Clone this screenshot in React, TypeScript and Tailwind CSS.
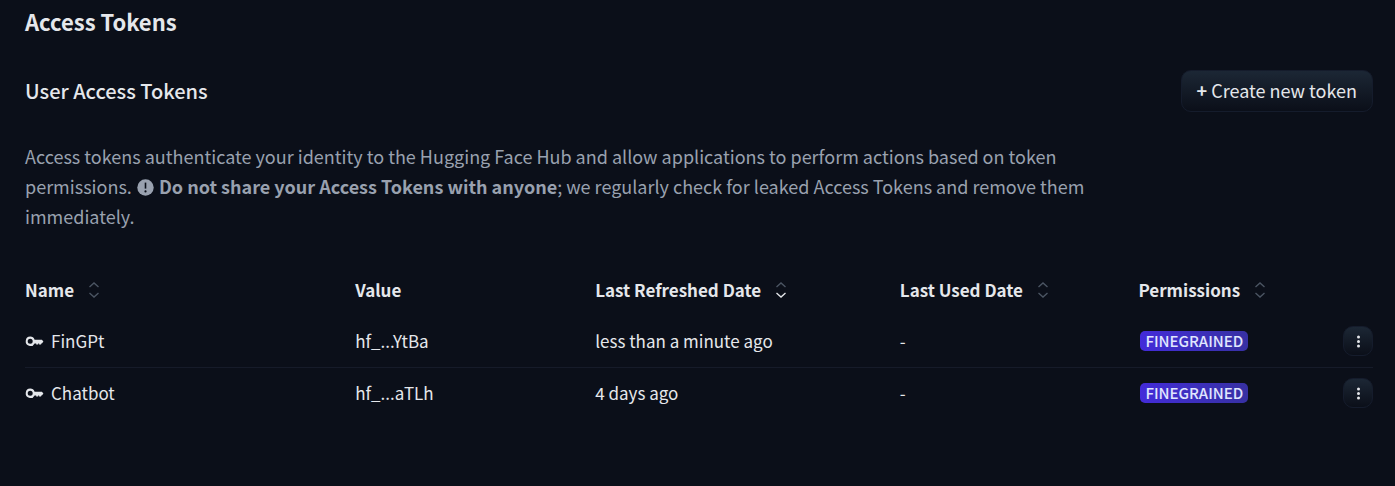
import React from "react";

type SortState = "none" | "desc";

const tokens = [
  { name: "FinGPt", value: "hf_...YtBa", refreshed: "less than a minute ago", used: "-", permission: "FINEGRAINED" },
  { name: "Chatbot", value: "hf_...aTLh", refreshed: "4 days ago", used: "-", permission: "FINEGRAINED" },
];

function KeyIcon() {
  return (
    <svg className="h-5 w-5 shrink-0" viewBox="0 0 20 20" fill="currentColor" aria-hidden="true">
      <path
        fillRule="evenodd"
        d="M5.2 5.6a4.7 4.7 0 0 1 4.4 3.2h7.3l1.5 1.6-1.5 2h-.8v1h-2v-1h-.9v1h-2v-1H9.6A4.7 4.7 0 1 1 5.2 5.6Zm0 2.2a2.5 2.5 0 1 0 0 5 2.5 2.5 0 0 0 0-5Z"
      />
    </svg>
  );
}

function SortIcon({ state }: { state: SortState }) {
  return (
    <svg className="h-4 w-3 shrink-0" viewBox="0 0 12 16" fill="none" strokeWidth="1.3" aria-hidden="true">
      <path d="M1.5 5 6 .9 10.5 5" className="stroke-[#4b5563]" />
      <path d="M1.5 11 6 15.1 10.5 11" className={state === "desc" ? "stroke-gray-200" : "stroke-[#4b5563]"} />
    </svg>
  );
}

function HeaderCell({ label, sort, width }: { label: string; sort?: SortState; width: string }) {
  return (
    <th scope="col" className={`${width} p-0 text-left text-[17px] font-bold`}>
      {sort ? (
        <button type="button" className="flex items-center gap-[14px] whitespace-nowrap">
          {label}
          <SortIcon state={sort} />
        </button>
      ) : (
        label
      )}
    </th>
  );
}

export default function App() {
  return (
    <main className="min-h-screen bg-[#0b0f19] pr-[22px] pb-16 pl-[25px] font-['Noto_Sans_CJK_SC',sans-serif] text-lg text-gray-200">
      <h1 className="pt-[6px] text-[22px] leading-[30px] font-bold">Access Tokens</h1>

      <section className="pt-[34px]">
        <div className="flex items-center justify-between">
          <h2 className="text-[20px] leading-[30px] font-medium">User Access Tokens</h2>
          <button
            type="button"
            className="h-[42px] rounded-[10px] border border-[#151c2c] bg-linear-to-b from-[#1c2735] to-[#0b0f19] px-[15px] pb-[2px] leading-[30px] whitespace-nowrap"
          >
            <span className="font-bold">+</span> Create new token
          </button>
        </div>

        <p className="max-w-[1070px] pt-[29px] leading-[30px] text-gray-400">
          Access tokens authenticate your identity to the Hugging Face Hub and allow applications to perform actions
          based on token permissions.{" "}
          <svg className="mx-px inline h-[17px] w-[17px] align-[-2px]" viewBox="0 0 17 17" aria-hidden="true">
            <circle cx="8.5" cy="8.5" r="8.2" fill="currentColor" />
            <path d="M8.5 3.6v6" stroke="#0b0f19" strokeWidth="1.6" />
            <circle cx="8.5" cy="12.4" r="1.1" fill="#0b0f19" />
          </svg>{" "}
          <strong className="font-bold">Do not share your Access Tokens with anyone</strong>; we regularly check for
          leaked Access Tokens and remove them immediately.
        </p>

        <table className="mt-[33px] w-full table-fixed border-collapse text-[17px]">
          <thead>
            <tr className="h-[52px]">
              <HeaderCell label="Name" sort="none" width="w-[24.5%]" />
              <HeaderCell label="Value" width="w-[17.8%]" />
              <HeaderCell label="Last Refreshed Date" sort="desc" width="w-[22.6%]" />
              <HeaderCell label="Last Used Date" sort="none" width="w-[17.7%]" />
              <HeaderCell label="Permissions" sort="none" width="w-[12%]" />
              <th className="p-0" aria-label="Actions" />
            </tr>
          </thead>
          <tbody>
            {tokens.map((token) => (
              <tr key={token.name} className="h-[51px] border-b border-[#161b29] last:border-b-0">
                <td className="p-0">
                  <div className="flex items-center gap-[6px]">
                    <KeyIcon />
                    {token.name}
                  </div>
                </td>
                <td className="p-0">{token.value}</td>
                <td className="p-0">{token.refreshed}</td>
                <td className="p-0">{token.used}</td>
                <td className="p-0">
                  <div className="flex pl-[2px]">
                    <span className="rounded-[5px] bg-linear-to-r from-[#432bd9] to-[#3730a3] px-[5px] text-[15px] leading-5 font-medium text-indigo-100">
                      {token.permission}
                    </span>
                  </div>
                </td>
                <td className="p-0">
                  <button
                    type="button"
                    aria-label={`Options for ${token.name}`}
                    className="ml-auto flex h-[30px] w-[30px] items-center justify-center rounded-[10px] border border-[#151c2c] bg-linear-to-b from-[#1c2735] to-[#0b0f19]"
                  >
                    <svg className="h-4 w-4" viewBox="0 0 16 16" fill="currentColor" aria-hidden="true">
                      <circle cx="8.5" cy="4" r="1.5" />
                      <circle cx="8.5" cy="8.5" r="1.5" />
                      <circle cx="8.5" cy="13" r="1.5" />
                    </svg>
                  </button>
                </td>
              </tr>
            ))}
          </tbody>
        </table>
      </section>
    </main>
  );
}
